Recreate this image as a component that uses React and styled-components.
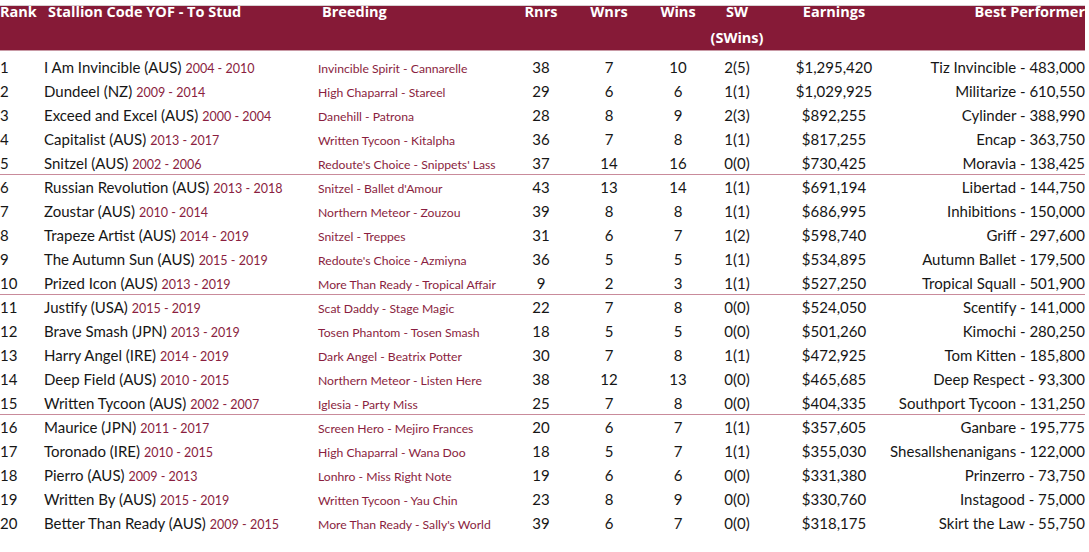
import React from "react";
import styled, { createGlobalStyle } from "styled-components";

const GlobalStyle = createGlobalStyle`
  body {
    margin: 0;
    background: #ffffff;
    font-family: Lato, "Open Sans", sans-serif;
  }
`;

const cols = "44px 274px 192px 62px 74px 64px 54px 140px minmax(0, 1fr)";

const rows = [
  ["1", "I Am Invincible (AUS)", "2004 - 2010", "Invincible Spirit - Cannarelle", "38", "7", "10", "2(5)", "$1,295,420", "Tiz Invincible - 483,000"],
  ["2", "Dundeel (NZ)", "2009 - 2014", "High Chaparral - Stareel", "29", "6", "6", "1(1)", "$1,029,925", "Militarize - 610,550"],
  ["3", "Exceed and Excel (AUS)", "2000 - 2004", "Danehill - Patrona", "28", "8", "9", "2(3)", "$892,255", "Cylinder - 388,990"],
  ["4", "Capitalist (AUS)", "2013 - 2017", "Written Tycoon - Kitalpha", "36", "7", "8", "1(1)", "$817,255", "Encap - 363,750"],
  ["5", "Snitzel (AUS)", "2002 - 2006", "Redoute's Choice - Snippets' Lass", "37", "14", "16", "0(0)", "$730,425", "Moravia - 138,425"],
  ["6", "Russian Revolution (AUS)", "2013 - 2018", "Snitzel - Ballet d'Amour", "43", "13", "14", "1(1)", "$691,194", "Libertad - 144,750"],
  ["7", "Zoustar (AUS)", "2010 - 2014", "Northern Meteor - Zouzou", "39", "8", "8", "1(1)", "$686,995", "Inhibitions - 150,000"],
  ["8", "Trapeze Artist (AUS)", "2014 - 2019", "Snitzel - Treppes", "31", "6", "7", "1(2)", "$598,740", "Griff - 297,600"],
  ["9", "The Autumn Sun (AUS)", "2015 - 2019", "Redoute's Choice - Azmiyna", "36", "5", "5", "1(1)", "$534,895", "Autumn Ballet - 179,500"],
  ["10", "Prized Icon (AUS)", "2013 - 2019", "More Than Ready - Tropical Affair", "9", "2", "3", "1(1)", "$527,250", "Tropical Squall - 501,900"],
  ["11", "Justify (USA)", "2015 - 2019", "Scat Daddy - Stage Magic", "22", "7", "8", "0(0)", "$524,050", "Scentify - 141,000"],
  ["12", "Brave Smash (JPN)", "2013 - 2019", "Tosen Phantom - Tosen Smash", "18", "5", "5", "0(0)", "$501,260", "Kimochi - 280,250"],
  ["13", "Harry Angel (IRE)", "2014 - 2019", "Dark Angel - Beatrix Potter", "30", "7", "8", "1(1)", "$472,925", "Tom Kitten - 185,800"],
  ["14", "Deep Field (AUS)", "2010 - 2015", "Northern Meteor - Listen Here", "38", "12", "13", "0(0)", "$465,685", "Deep Respect - 93,300"],
  ["15", "Written Tycoon (AUS)", "2002 - 2007", "Iglesia - Party Miss", "25", "7", "8", "0(0)", "$404,335", "Southport Tycoon - 131,250"],
  ["16", "Maurice (JPN)", "2011 - 2017", "Screen Hero - Mejiro Frances", "20", "6", "7", "1(1)", "$357,605", "Ganbare - 195,775"],
  ["17", "Toronado (IRE)", "2010 - 2015", "High Chaparral - Wana Doo", "18", "5", "7", "1(1)", "$355,030", "Shesallshenanigans - 122,000"],
  ["18", "Pierro (AUS)", "2009 - 2013", "Lonhro - Miss Right Note", "19", "6", "6", "0(0)", "$331,380", "Prinzerro - 73,750"],
  ["19", "Written By (AUS)", "2015 - 2019", "Written Tycoon - Yau Chin", "23", "8", "9", "0(0)", "$330,760", "Instagood - 75,000"],
  ["20", "Better Than Ready (AUS)", "2009 - 2015", "More Than Ready - Sally's World", "39", "6", "7", "0(0)", "$318,175", "Skirt the Law - 55,750"],
];

const Table = styled.div`
  width: 1085px;
  padding-top: 5px;
`;

const Head = styled.div`
  display: grid;
  grid-template-columns: ${cols};
  height: 44px;
  background: #861a37;
  border-top: 1px solid #d8d0d2;
  border-bottom: 1px solid #c99aa6;
  color: #ffffff;
  font-family: "Open Sans", Lato, sans-serif;
  font-weight: 700;
  font-size: 14.5px;
  line-height: 26px;
`;

const HeadCell = styled.div`
  margin-top: -7px;
  display: flex;
  flex-direction: column;
  align-items: ${(p) =>
    p.$align === "center" ? "center" : p.$align === "right" ? "flex-end" : "flex-start"};
  padding-left: ${(p) => p.$pl || 0}px;
  white-space: nowrap;
`;

const Body = styled.div`
  padding-top: 4px;
`;

const Row = styled.div`
  display: grid;
  grid-template-columns: ${cols};
  align-items: baseline;
  height: 24px;
  box-sizing: border-box;
  line-height: 24px;
  font-size: 15px;
  color: #161616;
  border-bottom: 1px solid ${(p) => (p.$divider ? "#c98b9b" : "transparent")};
`;

const Cell = styled.div`
  display: flex;
  justify-content: ${(p) =>
    p.$align === "center" ? "center" : p.$align === "right" ? "flex-end" : "flex-start"};
  align-items: baseline;
  gap: 4px;
  white-space: nowrap;
`;

const Years = styled.span`
  color: #8a1e40;
  font-size: 12.5px;
`;

const Breeding = styled(Cell)`
  color: #8a1e40;
  font-size: 12.2px;
`;

export default function App() {
  return (
    <>
      <GlobalStyle />
      <Table>
        <Head>
          <HeadCell>Rank</HeadCell>
          <HeadCell $pl={4}>Stallion Code YOF - To Stud</HeadCell>
          <HeadCell $pl={4}>Breeding</HeadCell>
          <HeadCell $align="center">Rnrs</HeadCell>
          <HeadCell $align="center">Wnrs</HeadCell>
          <HeadCell $align="center">Wins</HeadCell>
          <HeadCell $align="center">
            <span>SW</span>
            <span>(SWins)</span>
          </HeadCell>
          <HeadCell $align="center">Earnings</HeadCell>
          <HeadCell $align="right">Best Performer</HeadCell>
        </Head>
        <Body>
          {rows.map((r, i) => (
            <Row key={r[0]} $divider={i === 4 || i === 9 || i === 14}>
              <Cell>{r[0]}</Cell>
              <Cell>
                <span>{r[1]}</span>
                <Years>{r[2]}</Years>
              </Cell>
              <Breeding>{r[3]}</Breeding>
              <Cell $align="center">{r[4]}</Cell>
              <Cell $align="center">{r[5]}</Cell>
              <Cell $align="center">{r[6]}</Cell>
              <Cell $align="center">{r[7]}</Cell>
              <Cell $align="center">{r[8]}</Cell>
              <Cell $align="right">{r[9]}</Cell>
            </Row>
          ))}
        </Body>
      </Table>
    </>
  );
}
